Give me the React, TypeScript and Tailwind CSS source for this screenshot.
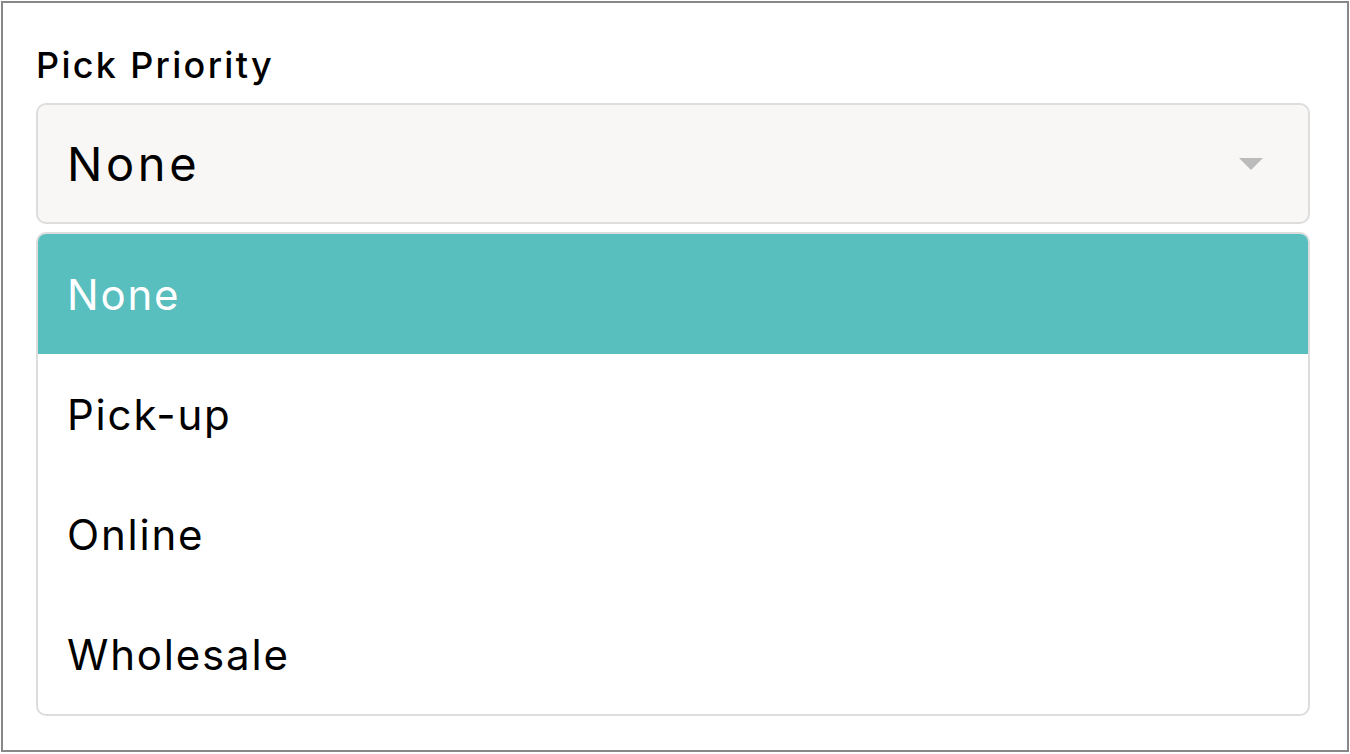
import React from 'react';

const options = ['None', 'Pick-up', 'Online', 'Wholesale'];

export default function App() {
  const selected = 'None';

  return (
    <div className="w-[1350px] h-[754px] bg-white pt-[1px] pl-[1px]" style={{ fontFamily: 'Inter, "Noto Sans", sans-serif' }}>
      <div className="w-[1348px] h-[751px] border-2 border-[#888888] bg-white pl-[33px] pt-[37px]">
        {/* Label */}
        <div className="h-[63px] text-[36px] leading-[50px] font-medium text-black tracking-[2.3px]">Pick Priority</div>

        {/* Select box */}
        <div className="w-[1274px] h-[121px] border-2 border-[#dddddd] rounded-[10px] bg-[#f8f7f5] flex items-center justify-between pl-[29px] pr-[45px]">
          <span className="text-[47px] text-black tracking-[3.6px] translate-y-[1px]">{selected}</span>
          <svg width="24" height="12" viewBox="0 0 24 12">
            <polygon points="0,0 24,0 12,12" fill="#bbbbbb" />
          </svg>
        </div>

        {/* Dropdown list */}
        <div className="mt-[8px] w-[1274px] border-2 border-[#dddddd] rounded-[10px] bg-white overflow-hidden">
          {options.map(opt => (
            <div
              key={opt}
              className={`h-[120px] flex items-center pl-[29px] text-[42px] tracking-[1.8px] ${opt === selected ? 'bg-[#58bebe] text-white' : 'text-black'}`}
            >
              {opt}
            </div>
          ))}
        </div>
      </div>
    </div>
  );
}
